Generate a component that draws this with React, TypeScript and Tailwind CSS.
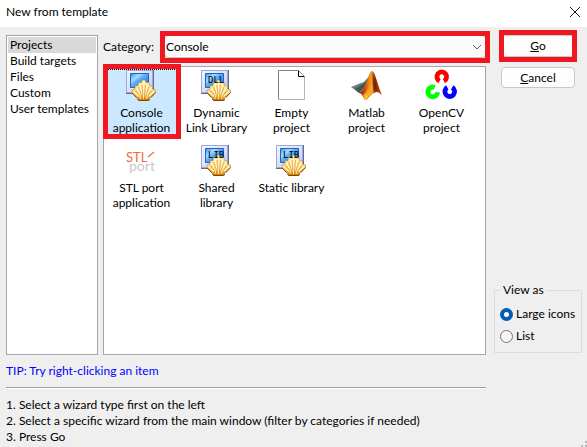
import { useState } from "react";
import type { ReactNode } from "react";

function ScreenShellIcon({ tag }: { tag?: string }) {
  return (
    <svg width="32" height="32" viewBox="0 0 32 32" aria-hidden="true">
      <defs>
        <linearGradient id="frame" x1="0" y1="0" x2="1" y2="1">
          <stop offset="0" stopColor="#f4f7ff" />
          <stop offset="1" stopColor="#c3cbee" />
        </linearGradient>
        <linearGradient id="screen" x1="0" y1="0" x2="1" y2="1">
          <stop offset="0" stopColor="#2f92ee" />
          <stop offset="0.3" stopColor="#a8dafc" />
          <stop offset="0.45" stopColor="#5cb0f6" />
          <stop offset="1" stopColor="#0f62d4" />
        </linearGradient>
        <linearGradient id="shell" gradientUnits="userSpaceOnUse" x1="0" y1="11" x2="0" y2="31">
          <stop offset="0" stopColor="#fff0a8" />
          <stop offset="0.5" stopColor="#fde08a" />
          <stop offset="0.8" stopColor="#f2ac34" />
          <stop offset="1" stopColor="#c87a10" />
        </linearGradient>
      </defs>
      <path d="M3 1h26v22l-2 2H1v-2z" fill="#6468a8" />
      <path d="M1.500 1.500h26v22h-26z" fill="url(#frame)" stroke="#a0a6d8" />
      <path d="M5.500 4.500h18v14h-18z" fill="url(#screen)" stroke="#1c62cc" />
      <path
        d="M17.500 11h2.500l1 2.500 3 0 .5 3 3 .5 0 3 3 1v2.500L26 28l-1.500 1v1.500L23 31.500h-9L12.500 30.500V29L11 28l-4-4.500V21l3-1 0-3 3-.5.5-3h3z"
        fill="url(#shell)"
        stroke="#b8781c"
        strokeWidth=".5"
        strokeLinejoin="round"
      />
      <path
        d="M18.700 12.500V26M15 15.500l2 10.500M22.500 15.500l-2 10.500M11.500 18.500l4 8M26 18.500l-4 8M8.500 22.500l5.500 5M29 22.500l-5.500 5"
        fill="none"
        stroke="#fffbe0"
        strokeWidth="1.100"
      />
      <path
        d="M17 16l1 10M20.500 16l-1 10M13.500 18l3 8M24 18l-3 8M10.500 21.500l4 5M27 21.500l-4 5"
        fill="none"
        stroke="#e09c34"
        strokeWidth=".7"
      />
      <path d="M11.500 28.500l-4.500-4.500M26 28.500l4.500-5M12.500 30.500l1.500 1h9l2-1" fill="none" stroke="#7c4808" />
      <path d="M15 30l.5-3M18.500 30v-4M22 30l-.5-3" stroke="#ffe9a0" />
      {tag && (
        <text x="8" y="14" fontFamily="'DejaVu Sans Mono', monospace" fontSize="9" fill="#000000">
          {tag}
        </text>
      )}
    </svg>
  );
}

function EmptyPageIcon() {
  return (
    <svg width="32" height="32" viewBox="0 0 32 32" aria-hidden="true">
      <path d="M3.500 1.500h20l6 6v23h-26z" fill="#ffffff" />
      <path d="M23 1.500H3.500v29" fill="none" stroke="#808080" />
      <path d="M29.500 8v22.500h-26" fill="none" stroke="#b4b4b4" />
      <path d="M23.500 1.500v6h6" fill="none" stroke="#000000" />
      <path d="M23.500 1.500l6 6" fill="none" stroke="#909090" />
    </svg>
  );
}

function MatlabIcon() {
  return (
    <svg width="32" height="32" viewBox="0 0 32 32" aria-hidden="true">
      <defs>
        <linearGradient id="peak" x1="0" y1="0" x2="1" y2="0">
          <stop offset="0" stopColor="#7a2008" />
          <stop offset="0.25" stopColor="#c8480c" />
          <stop offset="0.45" stopColor="#f08a18" />
          <stop offset="0.58" stopColor="#f6a020" />
          <stop offset="0.7" stopColor="#8c2408" />
          <stop offset="1" stopColor="#d84c18" />
        </linearGradient>
        <linearGradient id="glow" x1="0" y1="0" x2="0" y2="1">
          <stop offset="0.4" stopColor="#ffb020" stopOpacity="0" />
          <stop offset="1" stopColor="#ffe030" />
        </linearGradient>
      </defs>
      <path d="M1 18l10-4 3-1 7-8-5 13-7 6z" fill="#63807c" />
      <path d="M5 20l8-5 5-5-4 8-5 6z" fill="#3f5754" />
      <path d="M9 24c4-2 6-7 8-13 2-4 3-9 5-9 2 0 3 4 5 10 2 6 3 10 5 14-4-3-5-4-8-2-3 1-5 6-9 7-2-3-3-7-6-7z" fill="url(#peak)" />
      <path d="M13 26c5-4 7-14 9-22l1 14c-1 6-5 11-8 13z" fill="url(#glow)" />
      <path d="M22.500 3c2 4 3 14 6 19-3-3-4-2-5 0-1-6-1-12-1-19z" fill="#6b1b07" opacity=".7" />
    </svg>
  );
}

function OpenCvIcon() {
  return (
    <svg width="34" height="32" viewBox="0 0 34 32" fill="none" strokeWidth="5" aria-hidden="true">
      <path d="M15 12A5 5 0 1 1 19.500 12" stroke="#ff0000" />
      <path d="M10 18.500A5 5 0 1 0 13 23.500" stroke="#00ff00" />
      <path d="M23 18.500A5 5 0 1 0 28 18.500" stroke="#0000ff" />
    </svg>
  );
}

function StlPortIcon() {
  return (
    <svg width="32" height="32" viewBox="0 0 32 32" aria-hidden="true">
      <text x="4" y="27" fontFamily="Lato, sans-serif" fontSize="14" fill="#c8c8c8">
        port
      </text>
      <text x="1" y="18" fontFamily="Lato, sans-serif" fontSize="13" fill="#f06a38">
        STL
      </text>
      <path d="M23 13l6-5" fill="none" stroke="#f06a38" strokeWidth="1.200" />
    </svg>
  );
}

const wizardTypes = ["Projects", "Build targets", "Files", "Custom", "User templates"];

const templates: { lines: string[]; icon: ReactNode }[] = [
  { lines: ["Console", "application"], icon: <ScreenShellIcon /> },
  { lines: ["Dynamic", "Link Library"], icon: <ScreenShellIcon tag="DLL" /> },
  { lines: ["Empty", "project"], icon: <EmptyPageIcon /> },
  { lines: ["Matlab", "project"], icon: <MatlabIcon /> },
  { lines: ["OpenCV", "project"], icon: <OpenCvIcon /> },
  { lines: ["STL port", "application"], icon: <StlPortIcon /> },
  { lines: ["Shared", "library"], icon: <ScreenShellIcon tag="LIB" /> },
  { lines: ["Static library"], icon: <ScreenShellIcon tag="LIB" /> },
];

function Highlight({ className }: { className: string }) {
  return <span aria-hidden="true" className={`pointer-events-none absolute z-10 border-[5px] border-[#f01820] ${className}`} />;
}

function ViewOption({ label, checked, onSelect }: { label: string; checked: boolean; onSelect: () => void }) {
  return (
    <label className="flex h-[22px] items-center gap-[3px]">
      <input
        type="radio"
        name="view"
        checked={checked}
        onChange={onSelect}
        className="size-[13px] shrink-0 appearance-none rounded-full border border-[#767676] bg-[#f5f5f5] checked:border-4 checked:border-[#005fb8] checked:bg-white"
      />
      {label}
    </label>
  );
}

export default function App() {
  const [type, setType] = useState("Projects");
  const [template, setTemplate] = useState(0);
  const [view, setView] = useState("Large icons");

  return (
    <div className="flex min-h-screen flex-col bg-[#efefef] font-['Lato','Open_Sans',sans-serif] text-xs leading-4 text-black">
      <header className="flex h-[27px] items-center justify-between bg-white px-1.5">
        <h1 className="pb-1">New from template</h1>
        <button type="button" aria-label="Close" className="pb-1">
          <svg width="12" height="12" viewBox="0 0 12 12" fill="none" stroke="#1a1a1a" aria-hidden="true">
            <path d="M1 1l10 10M11 1L1 11" />
          </svg>
        </button>
      </header>

      <main className="flex flex-1 gap-2 pt-2 pr-[5px] pl-1.5">
        <div className="flex min-w-0 flex-1 flex-col">
          <div className="flex flex-1 gap-[5px]">
            <nav className="w-[92px] shrink-0 border border-[#a5a5aa] bg-white p-px">
              {wizardTypes.map((name) => (
                <button
                  key={name}
                  type="button"
                  onClick={() => setType(name)}
                  className={`block h-4 w-full pl-0.5 text-left whitespace-nowrap ${name === type ? "bg-[#d9d9d9]" : ""}`}
                >
                  {name}
                </button>
              ))}
            </nav>

            <div className="flex min-w-0 flex-1 flex-col">
              <div className="flex h-[31px] items-start">
                <label htmlFor="category" className="w-[61px] shrink-0 pt-1">
                  Category:
                </label>
                <div className="relative flex-1">
                  <select
                    id="category"
                    defaultValue="Console"
                    className="block h-[23px] w-full appearance-none rounded-sm border border-[#c8c8c8] bg-[#fbfbfb] pl-px"
                  >
                    <option>Console</option>
                  </select>
                  <svg
                    className="pointer-events-none absolute top-2 right-1"
                    width="10"
                    height="8"
                    viewBox="0 0 10 8"
                    fill="none"
                    stroke="#5f5f5f"
                    aria-hidden="true"
                  >
                    <path d="M1 2l4 4 4-4" />
                  </svg>
                  <Highlight className="-inset-x-1 -top-1 -bottom-[5px]" />
                </div>
              </div>

              <div className="flex-1 border border-[#a5a5aa] bg-white">
                <div className="flex flex-wrap content-start gap-y-1">
                  {templates.map(({ lines, icon }, index) => (
                    <button
                      key={lines.join(" ")}
                      type="button"
                      onClick={() => setTemplate(index)}
                      className={`relative flex h-[71px] w-[75px] flex-col items-center pt-0.5 text-center leading-[15px] whitespace-nowrap ${
                        index === template ? "bg-[#cce8ff]" : ""
                      }`}
                    >
                      <span className="flex h-9 w-[33px] shrink-0 items-start">{icon}</span>
                      {lines.map((line) => (
                        <span key={line}>{line}</span>
                      ))}
                      {index === 0 && (
                        <>
                          <span aria-hidden="true" className="absolute inset-x-0 top-0.5 border-t border-dotted border-black" />
                          <Highlight className="-top-[3px] -right-0.5 -bottom-px -left-px" />
                        </>
                      )}
                    </button>
                  ))}
                </div>
              </div>
            </div>
          </div>

          <p className="pt-2 text-[#0000ff]">TIP: Try right-clicking an item</p>
          <hr className="mt-2 border-t border-b border-t-[#a0a0a0] border-b-white" />
          <ol className="mt-2 h-[50px] list-inside list-decimal">
            <li>Select a wizard type first on the left</li>
            <li>Select a specific wizard from the main window (filter by categories if needed)</li>
            <li>Press Go</li>
          </ol>
        </div>

        <aside className="flex w-[88px] shrink-0 flex-col pb-[94px]">
          <div className="flex flex-col gap-2.5 px-[7px]">
            <div className="relative">
              <button type="button" className="block h-[22px] w-full rounded border border-[#c8c8c8] bg-[#fdfdfd]">
                <u>G</u>o
              </button>
              <Highlight className="-inset-x-0.5 -top-[5px] -bottom-[5px]" />
            </div>
            <button type="button" className="block h-[21px] w-full rounded border border-[#c8c8c8] bg-[#fdfdfd]">
              <u>C</u>ancel
            </button>
          </div>
          <fieldset className="mt-auto h-[71px] border border-[#dcdcdc] pt-[5px] pl-[5px]">
            <legend className="ml-px px-0.5">View as</legend>
            {["Large icons", "List"].map((label) => (
              <ViewOption key={label} label={label} checked={view === label} onSelect={() => setView(label)} />
            ))}
          </fieldset>
        </aside>
      </main>
      <svg className="absolute right-0 bottom-0" width="6" height="6" viewBox="0 0 6 6" fill="#b8b8b8" aria-hidden="true">
        <path d="M4 0h2v2H4zM0 4h2v2H0zM4 4h2v2H4z" />
      </svg>
    </div>
  );
}
